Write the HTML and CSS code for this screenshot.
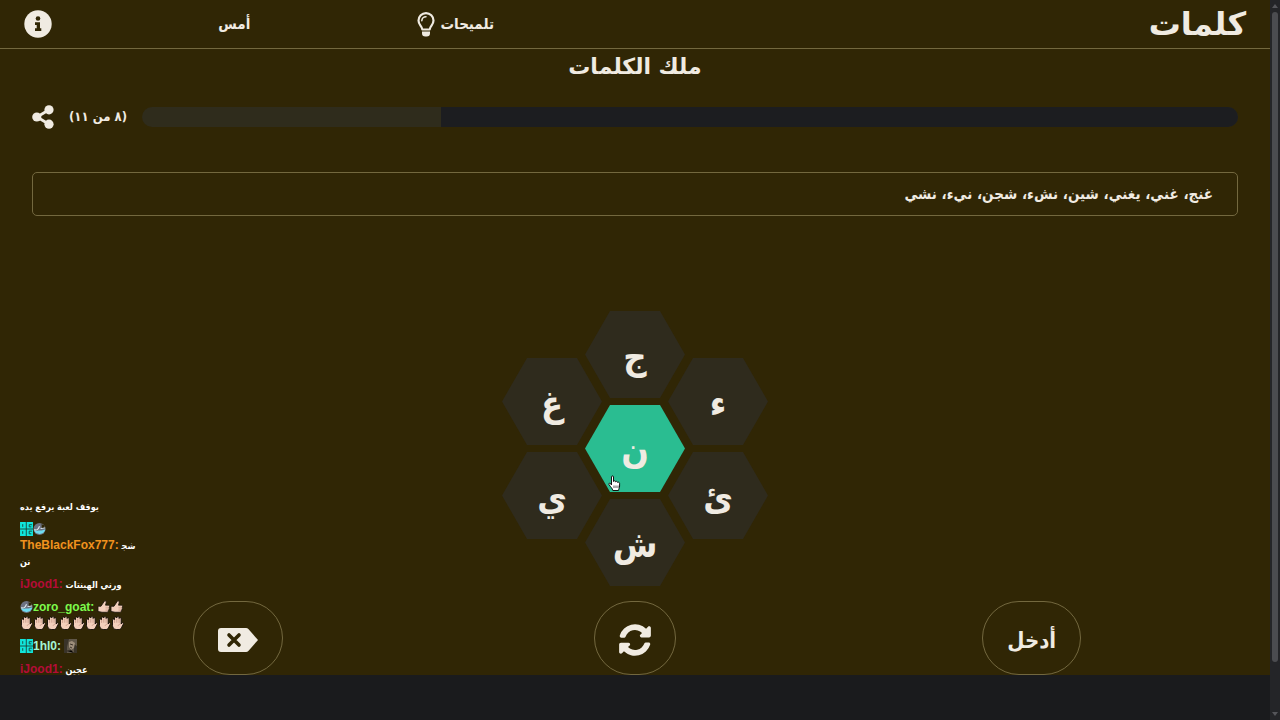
FILE: index.html
```html
<!DOCTYPE html>
<html lang="ar" dir="rtl">
  <head>
    <meta charset="UTF-8" />
    <meta name="viewport" content="width=device-width, initial-scale=1.0" />
    <title>كلمات</title>
    <link rel="stylesheet" href="styles.css" />
  </head>
  <body>
    <svg class="sprite" aria-hidden="true">
      <symbol id="thumb" viewBox="0.500 0.500 13 13.500">
        <path d="M1.500 6.500h3L8 1.200c1.500-.4 2 .8 1.600 2L9 5.400h3c1.200.1 1.400 1.500.5 2 .7.600.6 1.500-.2 1.800.4.700.2 1.500-.6 1.700.1 1-.4 1.600-1.400 1.600H5.500l-4-.8z" fill="#f3cfbc" stroke="#17120a" stroke-width=".8" stroke-linejoin="round" />
        <path d="M9 7.500h3M9 9.300h2.800M9 11h2.400" stroke="#b98573" stroke-width=".5" />
      </symbol>
      <symbol id="hand" viewBox="0 0 13 14">
        <path d="M1.500 8V4c0-1.300 1.900-1.300 2-.1V2c0-1.400 2.200-1.400 2.300 0v-.4C6 .2 8 .2 8.100 1.700v.8c.2-1.200 2.100-1.100 2.100.2V8l.5-.9c.8-.9 2.200-.2 1.700.9l-2 3.800c-.5 1-1.300 1.700-2.400 1.700H5.200C3 13.500 1.500 11.500 1.500 9.500z" fill="#f3cfbc" stroke="#100b06" stroke-width=".9" />
        <path d="M3.600 3.500v3.400M5.800 2.500v4.200M8.100 2.600v4.200M7 9.800c.3-1 1.300-1.600 2.600-1.600" fill="none" stroke="#a87565" stroke-width=".5" />
      </symbol>
      <symbol id="badge-og" viewBox="0 0 12 13">
        <rect width="12" height="13" fill="#10e6dc" />
        <path d="M5.800 0v13M0 6.500h12M2.500 2v2.500M11 2.500H8.500v2h2M2.500 8.500V11M11 8.500H8.500V11h2" fill="none" stroke="#1b3a30" stroke-width=".8" />
      </symbol>
      <symbol id="badge-wave" viewBox="0 0 12 12">
        <circle cx="6" cy="6" r="5.600" fill="#6d7282" />
        <path d="M.8 7c2 1.200 3 .2 4.800.4 2 .3 3.800-.6 5.800-.9A5.600 5.600 0 0 1 .8 7z" fill="#6fdcf0" />
        <path d="M1.200 6.500c2.400 1.300 4-.8 4.800-3M7 5.600l4.200-.8" fill="none" stroke="#e2edf2" stroke-width="1" />
        <path d="M8 .8l1 1.600 1.800-.6-.5 2 1.500.4-3.800.8z" fill="#302605" />
      </symbol>
    </svg>

    <main class="app">
      <header class="header">
        <a class="logo" href="#">كلمات</a>
        <nav class="nav">
          <button class="nav-button">
            تلميحات
            <svg class="bulb" viewBox="0 0 18 26" aria-hidden="true">
              <path d="M5.300 18.500C5 15 1.500 13.800 1.500 9.600a7.500 7.500 0 0 1 15 0c0 4.200-3.500 5.400-3.800 8.900z" fill="none" stroke="currentColor" stroke-width="2.200" stroke-linejoin="round" />
              <path d="M4.800 9.800A4.200 4.200 0 0 1 9 5.700" fill="none" stroke="currentColor" stroke-width="1.500" stroke-linecap="round" />
              <path d="M5 20.500h8v1.800a3.300 3.300 0 0 1-3.300 3.300H8.300A3.300 3.300 0 0 1 5 22.300z" fill="currentColor" />
            </svg>
          </button>
          <button class="nav-button">أمس</button>
          <button class="nav-button" aria-label="معلومات">
            <svg class="info" viewBox="0 0 28 28" aria-hidden="true">
              <circle cx="14" cy="14" r="13.700" fill="currentColor" />
              <circle cx="14" cy="8.500" r="2.300" fill="#302605" />
              <path d="M11 12.300h5v6h1.300v2.700H11v-2.700h1.700V15H11z" fill="#302605" />
            </svg>
          </button>
        </nav>
      </header>

      <h1 class="title">ملك الكلمات</h1>

      <div class="score">
        <div class="bar"><div class="bar-fill" style="width: 72.700%"></div></div>
        <span>(٨ من ١١)</span>
        <button class="share" aria-label="مشاركة">
          <svg viewBox="0 0 22 24" aria-hidden="true">
            <path d="M17 4.800L5 12l12 7.200" fill="none" stroke="currentColor" stroke-width="2.800" />
            <circle cx="17" cy="4.800" r="4.600" fill="currentColor" />
            <circle cx="4.800" cy="12" r="4.600" fill="currentColor" />
            <circle cx="17" cy="19.200" r="4.600" fill="currentColor" />
          </svg>
        </button>
      </div>

      <p class="words">غنج، غني، يغني، شين، نشء، شجن، نيء، نشي</p>

      <div class="hive">
        <div class="hive-column">
          <button class="cell">ء</button>
          <button class="cell">ئ</button>
        </div>
        <div class="hive-column hive-middle">
          <button class="cell">ج</button>
          <button class="cell cell-center">ن</button>
          <button class="cell">ش</button>
          <svg class="pointer" viewBox="0 0 13 17" aria-hidden="true">
            <path d="M3.500 10V2c0-1.500 2-1.500 2 0v4.500c.3-1 2-.9 2.100.3.500-.8 1.900-.5 2 .6.700-.6 2-.1 2 1V11c0 2-.9 2.700-1.100 4.500H4.800C4.600 13.500 2.500 12 1 9.600c-.6-1.200.8-1.900 1.600-1z" fill="#fff" stroke="#111" stroke-width="1" />
            <path d="M6 10.500V13M8 10.500V13M10 10.500V13" stroke="#111" stroke-width=".7" />
          </svg>
        </div>
        <div class="hive-column">
          <button class="cell">غ</button>
          <button class="cell">ي</button>
        </div>
      </div>

      <div class="actions">
        <button class="action">أدخل</button>
        <button class="action" aria-label="تبديل">
          <svg class="refresh" viewBox="0 0 512 512" aria-hidden="true">
            <path d="M105 203a160 160 0 0 1 264-60l-28 27c-16 17-5 44 19 44h120c18 0 30-12 30-30V63c0-25-29-37-46-20l-31 32A256 256 0 0 0 14 181c-8 22 6 37 24 37h44c11 0 19-5 23-15zM407 309a160 160 0 0 1-264 60l28-27c16-17 5-44-19-44H32c-18 0-30 12-30 30v121c0 25 29 37 46 20l31-32a256 256 0 0 0 419-106c8-22-6-37-24-37h-44c-11 0-19 5-23 15z" fill="currentColor" />
          </svg>
        </button>
        <button class="action" aria-label="حذف">
          <svg class="delete" viewBox="0 0 40 24" aria-hidden="true">
            <path d="M3 0h25q1.500 0 2.600 1.200L40 12l-9.400 10.800Q29.500 24 28 24H3q-3 0-3-3V3q0-3 3-3z" fill="currentColor" />
            <path d="M11 7l10 10M21 7L11 17" stroke="#302605" stroke-width="3.600" stroke-linecap="round" />
          </svg>
        </button>
      </div>

      <div class="chat" dir="ltr">
        <p>يوقف لعبة يرفع يده</p>
        <p>
          <svg class="badge"><use href="#badge-og" /></svg><svg class="badge"><use href="#badge-wave" /></svg><br />
          <b class="orange">TheBlackFox777:</b> شج&zwj;<br />
          نن
        </p>
        <p><b class="red">iJood1:</b> ورني الهينتات</p>
        <p>
          <svg class="badge"><use href="#badge-wave" /></svg><b class="green">zoro_goat:</b>
          <svg class="emote"><use href="#thumb" /></svg><svg class="emote"><use href="#thumb" /></svg><br />
          <svg class="emote"><use href="#hand" /></svg><svg class="emote"><use href="#hand" /></svg><svg class="emote"><use href="#hand" /></svg><svg class="emote"><use href="#hand" /></svg><svg class="emote"><use href="#hand" /></svg><svg class="emote"><use href="#hand" /></svg><svg class="emote"><use href="#hand" /></svg><svg class="emote"><use href="#hand" /></svg>
        </p>
        <p>
          <svg class="badge"><use href="#badge-og" /></svg><b class="mint">1hl0:</b>
          <svg class="emote" viewBox="0 0 13 14">
            <rect width="13" height="14" fill="#605749" />
            <path d="M0 0h5L3 8v6H0zM10 5l4 3v6h-4z" fill="#393329" />
            <path d="M5 3l3-1 3 2-1 5-3 2-2-3z" fill="#9d8e7b" />
            <path d="M6 5l3 1M6 8l2 1M3 12l4-1 3 3" stroke="#3d342b" />
          </svg>
        </p>
        <p><b class="red">iJood1:</b> عجين</p>
      </div>
    </main>

    <div class="scrollbar" aria-hidden="true">
      <svg viewBox="0 0 6 4"><path d="M0 4l3-4 3 4z" fill="#55565a" /></svg>
      <div class="scroll-thumb"></div>
      <svg viewBox="0 0 6 4"><path d="M0 0l3 4 3-4z" fill="#55565a" /></svg>
    </div>
  </body>
</html>
```
FILE: styles.css
```css
* {
  box-sizing: border-box;
}

body {
  margin: 0;
  min-height: 100vh;
  display: flex;
  flex-direction: row-reverse;
  background: #1a1b1d;
  color: #f0ebe2;
  font-family: "DejaVu Sans", sans-serif;
}

button {
  padding: 0;
  border: 0;
  background: none;
  color: inherit;
  font: inherit;
  cursor: pointer;
}

svg {
  display: block;
}

.sprite {
  position: absolute;
  width: 0;
  height: 0;
}

.app {
  position: relative;
  flex: 1;
  align-self: flex-start;
  background: #302605;
}

.header {
  display: grid;
  grid-template-columns: 8fr 5fr;
  align-items: center;
  height: 49px;
  padding: 0 24px;
  border-bottom: 1px solid #73683f;
}

.logo {
  color: inherit;
  font-size: 32px;
  font-weight: bold;
  line-height: 48px;
  text-decoration: none;
}

.nav {
  display: flex;
  justify-content: space-between;
  align-items: center;
}

.nav-button {
  display: flex;
  align-items: center;
  gap: 6px;
  font: bold 15px/24px "DejaVu Sans Condensed", "DejaVu Sans", sans-serif;
}

.bulb {
  width: 18px;
  height: 26px;
}

.info {
  width: 28px;
  height: 28px;
}

.title {
  margin: 0;
  font-size: 22px;
  line-height: 36px;
  text-align: center;
}

.score {
  display: flex;
  align-items: center;
  gap: 15px;
  padding: 20px 32px;
  font: bold 13px/24px "DejaVu Sans Condensed", "DejaVu Sans", sans-serif;
}

.bar {
  flex: 1;
  height: 20px;
  border-radius: 10px;
  overflow: hidden;
  background: #2f2c1c;
}

.bar-fill {
  height: 100%;
  background: #1c1d20;
}

.share svg {
  width: 22px;
  height: 24px;
}

.words {
  margin: 23px 32px 0;
  padding: 0 24px;
  border: 1px solid #73683f;
  border-radius: 5px;
  font: bold 15px/42px "DejaVu Sans Condensed", "DejaVu Sans", sans-serif;
}

.hive {
  display: flex;
  justify-content: center;
  align-items: center;
  padding: 95px 0 15px;
}

.hive-column {
  display: flex;
  flex-direction: column;
  gap: 7px;
}

.hive-middle {
  position: relative;
  margin: 0 -17px;
}

.cell {
  width: 100px;
  height: 87px;
  padding-top: 4px;
  background: #2f2b1d;
  clip-path: polygon(25% 0, 75% 0, 100% 50%, 75% 100%, 25% 100%, 0 50%);
  font: bold 36px "DejaVu Sans Condensed", "DejaVu Sans", sans-serif;
}

.cell-center {
  background: #2abd91;
}

.pointer {
  position: absolute;
  left: 23px;
  top: 164px;
  width: 13px;
  height: 17px;
}

.actions {
  display: grid;
  grid-template-columns: repeat(3, 1fr);
  justify-items: center;
  padding: 0 40px;
}

.action {
  height: 74px;
  padding: 4px 24px 0;
  border: 1px solid #73683f;
  border-radius: 37px;
  font: bold 22px "DejaVu Sans Condensed", "DejaVu Sans", sans-serif;
}

.refresh {
  width: 32px;
  height: 32px;
}

.delete {
  width: 40px;
  height: 24px;
}

/* stream chat over the page */
.chat {
  position: absolute;
  left: 20px;
  bottom: -3px;
  color: #fff;
  white-space: nowrap;
}

.chat p {
  margin: 7px 0 0;
  font: bold 9px/16px "DejaVu Sans Condensed", "DejaVu Sans", sans-serif;
}

.chat b {
  font: bold 12px/12px "Liberation Sans", sans-serif;
}

.badge,
.emote {
  display: inline-block;
  vertical-align: top;
  width: 13px;
  height: 14px;
}

.orange {
  color: #f0921e;
}

.red {
  color: #b50c37;
}

.green {
  color: #7dfa4c;
}

.mint {
  color: #a5f5d5;
}

.scrollbar {
  display: flex;
  flex-direction: column;
  align-items: center;
  width: 10px;
  height: 100vh;
  padding: 4px 0;
  background: #242528;
}

.scrollbar svg {
  width: 6px;
  height: 4px;
}

.scroll-thumb {
  width: 6px;
  height: 650px;
  margin: 4px 0 auto;
  border-radius: 3px;
  background: #4b4c50;
}
```
